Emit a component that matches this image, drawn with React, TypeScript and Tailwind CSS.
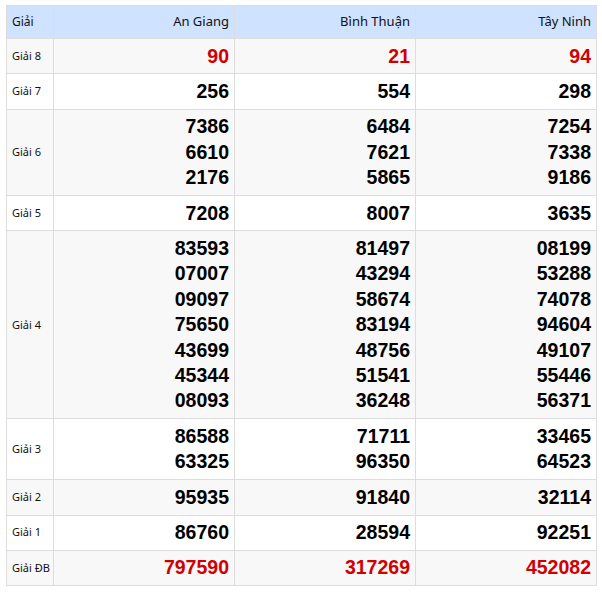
import React from "react";

type Row = { label: string; values: string[][]; red?: boolean };

const rows: Row[] = [
  { label: "Giải 8", values: [["90"], ["21"], ["94"]], red: true },
  { label: "Giải 7", values: [["256"], ["554"], ["298"]] },
  {
    label: "Giải 6",
    values: [
      ["7386", "6610", "2176"],
      ["6484", "7621", "5865"],
      ["7254", "7338", "9186"],
    ],
  },
  { label: "Giải 5", values: [["7208"], ["8007"], ["3635"]] },
  {
    label: "Giải 4",
    values: [
      ["83593", "07007", "09097", "75650", "43699", "45344", "08093"],
      ["81497", "43294", "58674", "83194", "48756", "51541", "36248"],
      ["08199", "53288", "74078", "94604", "49107", "55446", "56371"],
    ],
  },
  {
    label: "Giải 3",
    values: [
      ["86588", "63325"],
      ["71711", "96350"],
      ["33465", "64523"],
    ],
  },
  { label: "Giải 2", values: [["95935"], ["91840"], ["32114"]] },
  { label: "Giải 1", values: [["86760"], ["28594"], ["92251"]] },
  { label: "Giải ĐB", values: [["797590"], ["317269"], ["452082"]], red: true },
];

const labelFont = { fontFamily: '"Noto Sans", "Open Sans", sans-serif' };
const numFont = { fontFamily: '"Liberation Sans", Arial, sans-serif' };

export default function App() {
  return (
    <div className="bg-white w-[602px] h-[595px] pt-[5px] pl-[6px]">
      <table className="table-fixed border-collapse w-[590px] border border-[#dddddd]">
        <colgroup>
          <col className="w-[47px]" />
          <col className="w-[181px]" />
          <col className="w-[181px]" />
          <col className="w-[181px]" />
        </colgroup>
        <thead>
          <tr className="bg-[#cfe2ff]">
            <th
              className="border border-[#dddddd] text-left font-normal text-[12px] text-[#111] pl-[5px] pr-0 h-[33px] whitespace-nowrap"
              style={labelFont}
            >
              Giải
            </th>
            {["An Giang", "Bình Thuận", "Tây Ninh"].map((p) => (
              <th
                key={p}
                className="border border-[#dddddd] text-right font-normal text-[13px] text-[#111] px-[5px] h-[33px]"
                style={labelFont}
              >
                {p}
              </th>
            ))}
          </tr>
        </thead>
        <tbody>
          {rows.map((r, i) => (
            <tr key={r.label} className={i % 2 === 0 ? "bg-[#f8f8f8]" : "bg-white"}>
              <td
                className="border border-[#dddddd] text-[11px] text-[#111] pl-[5px] pr-0 align-middle whitespace-nowrap"
                style={labelFont}
              >
                {r.label}
              </td>
              {r.values.map((vs, j) => (
                <td
                  key={j}
                  className={
                    "border border-[#dddddd] text-right px-[5px] py-[4.5px] align-middle font-bold text-[19.5px] leading-[25.4px] " +
                    (r.red ? "text-[#d10000]" : "text-black")
                  }
                  style={numFont}
                >
                  {vs.map((v) => (
                    <div key={v}>{v}</div>
                  ))}
                </td>
              ))}
            </tr>
          ))}
        </tbody>
      </table>
    </div>
  );
}
